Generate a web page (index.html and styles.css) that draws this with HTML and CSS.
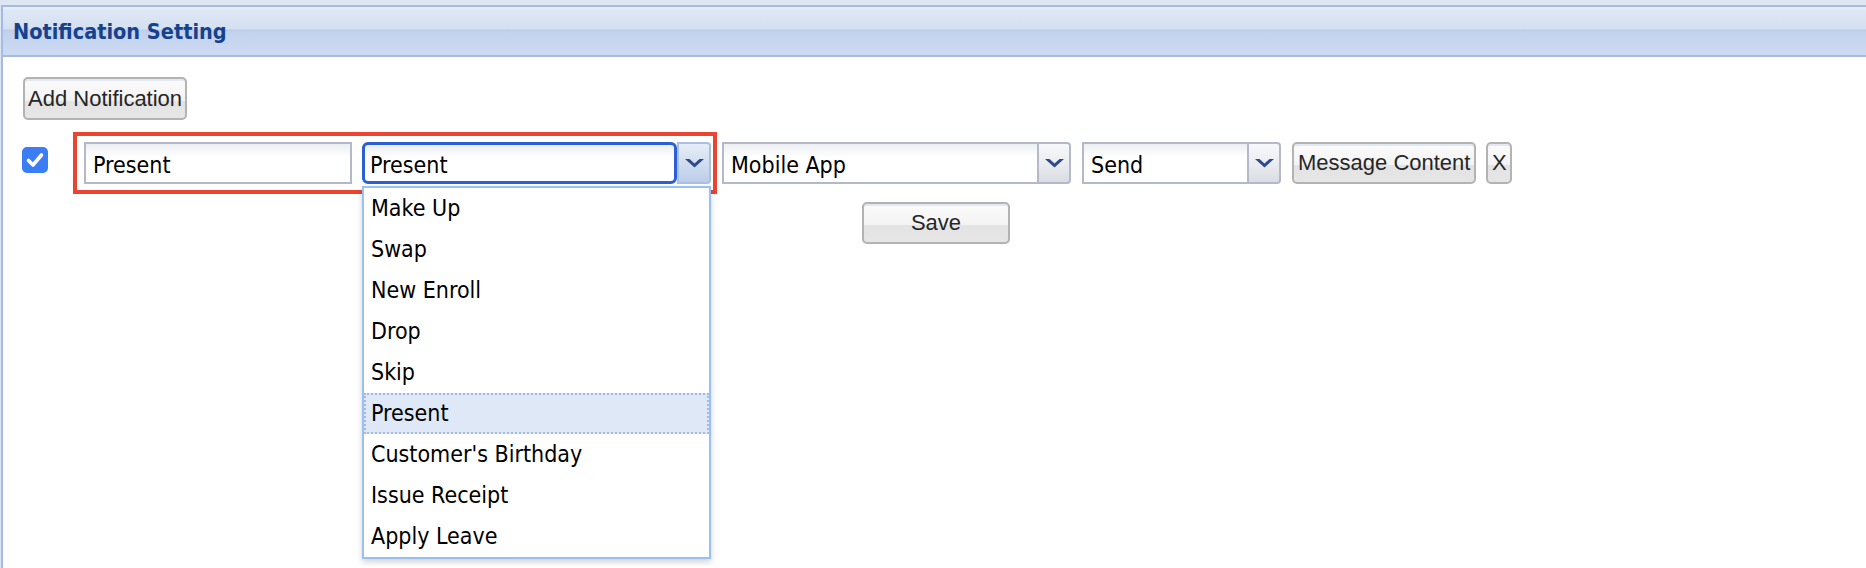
FILE: index.html
```html
<!DOCTYPE html>
<html lang="en">
<head>
  <meta charset="UTF-8">
  <meta name="viewport" content="width=device-width, initial-scale=1.0">
  <title>Notification Setting</title>
  <link rel="stylesheet" href="styles.css">
</head>
<body>

<div class="panel">
  <div class="panel-header">Notification Setting</div>
  <div class="panel-body">
    <button class="btn btn-add">Add Notification</button>

    <div class="notify-row">
      <span class="check">
        <svg width="26" height="26" viewBox="0 0 26 26"><polyline points="6.5,13.5 11,18 19.5,8" fill="none" stroke="#fff" stroke-width="3.6" stroke-linecap="round" stroke-linejoin="round"/></svg>
      </span>

      <div class="highlight">
        <input class="field field-name" type="text" value="Present" readonly>
        <div class="combo combo-event focused">
          <input class="combo-text" type="text" value="Present" readonly>
          <span class="combo-trigger">
            <svg width="19" height="9" viewBox="0 0 19 9"><polygon points="0,0 4.5,0 9.5,4.4 14.5,0 19,0 9.5,8.6" fill="#2d4b8c"/></svg>
          </span>
          <ul class="combo-list">
            <li>Make Up</li>
            <li>Swap</li>
            <li>New Enroll</li>
            <li>Drop</li>
            <li>Skip</li>
            <li class="selected">Present</li>
            <li>Customer's Birthday</li>
            <li>Issue Receipt</li>
            <li>Apply Leave</li>
          </ul>
        </div>
      </div>

      <div class="combo combo-channel">
        <input class="combo-text" type="text" value="Mobile App" readonly>
        <span class="combo-trigger">
          <svg width="19" height="9" viewBox="0 0 19 9"><polygon points="0,0 4.5,0 9.5,4.4 14.5,0 19,0 9.5,8.6" fill="#2d4b8c"/></svg>
        </span>
      </div>

      <div class="combo combo-action">
        <input class="combo-text" type="text" value="Send" readonly>
        <span class="combo-trigger">
          <svg width="19" height="9" viewBox="0 0 19 9"><polygon points="0,0 4.5,0 9.5,4.4 14.5,0 19,0 9.5,8.6" fill="#2d4b8c"/></svg>
        </span>
      </div>

      <button class="btn btn-row btn-msg">Message Content</button>
      <button class="btn btn-row btn-x">X</button>
    </div>

    <div class="save-bar">
      <button class="btn btn-save">Save</button>
    </div>
  </div>
</div>

</body>
</html>
```

FILE: styles.css
```css
body {
  margin: 0;
  padding: 5px 0 0 1px;
  height: 568px;
  box-sizing: border-box;
  overflow: hidden;
  background-color: #dfe6f3;
  font-family: "DejaVu Sans Condensed", "DejaVu Sans", sans-serif;
  font-stretch: condensed;
}
.panel {
  min-height: 600px;
  background-color: #fff;
  border: 2px solid #a3bbe5;
  border-right: none;
}
.panel-header {
  height: 47px;
  padding: 1px 0 0 10px;
  line-height: 47px;
  border-bottom: 2px solid #a3bbe5;
  background: linear-gradient(to bottom, #eef3fa 0, #dfe8f5 6%, #d4dff1 46%, #bacbeb 48%, #c2d2ee 52%, #cddbf1 100%);
  color: #15428b;
  font-size: 21.5px;
  font-weight: bold;
}
.panel-body {
  padding: 20px 0 0 19px;
}

/* buttons */
.btn {
  height: 43px;
  padding: 0 3px;
  border: 2px solid #b3b3b3;
  border-radius: 5px;
  background: linear-gradient(to bottom, #fbfbfb 0, #f3f3f3 55%, #e3e3e3 56%, #e6e6e6 100%);
  box-shadow: inset 0 2px 0 #e3e9f2;
  color: #262626;
  font-family: "Liberation Sans", Arial, sans-serif;
  font-size: 22px;
  cursor: pointer;
}
.btn-add {
  display: block;
  margin-left: 1px;
}
.btn-row {
  height: 42px;
}
.btn-msg {
  margin-left: 11px;
  padding: 0 4px;
}
.btn-x {
  margin-left: 10px;
  width: 26px;
  padding: 0;
}
.save-bar {
  margin-top: 8px;
  padding-left: 840px;
}
.btn-save {
  width: 148px;
  height: 42px;
}

/* row */
.notify-row {
  display: flex;
  align-items: center;
  margin-top: 12px;
}
.check {
  display: block;
  width: 26px;
  height: 26px;
  margin-bottom: 6px;
  border-radius: 5px;
  background-color: #3a7df4;
}
.check svg {
  display: block;
}
.highlight {
  display: flex;
  gap: 10px;
  margin-left: 25px;
  padding: 6px 2px 6px 7px;
  border: 4px solid #ea4530;
}

/* fields */
.field,
.combo-text {
  box-sizing: border-box;
  height: 42px;
  margin: 0;
  padding: 4px 7px 0;
  border: 2px solid #b5b8c8;
  background: linear-gradient(to bottom, #eceef1 0, #fff 35%);
  color: #000;
  font-family: inherit;
  font-stretch: condensed;
  font-size: 23px;
  outline: none;
}
.field-name {
  width: 268px;
}
.combo {
  position: relative;
  display: flex;
  height: 42px;
}
.combo-text {
  flex: 1;
  min-width: 0;
  border-right: none;
}
.combo-trigger {
  display: flex;
  align-items: center;
  justify-content: center;
  width: 34px;
  box-sizing: border-box;
  border: 2px solid #b5b8c8;
  border-radius: 0 4px 4px 0;
  background: linear-gradient(to bottom, #f7f8fa 0, #eceef2 45%, #d9dce2 100%);
}
.combo-trigger svg {
  margin-top: 1px;
}
.combo-event,
.combo-channel {
  width: 349px;
}
.combo-channel {
  margin-left: 5px;
}
.combo-action {
  width: 199px;
  margin-left: 11px;
}
.focused .combo-text {
  padding-left: 5px;
  border: 3px solid #2b5fd5;
  border-radius: 6px;
}
.focused .combo-trigger {
  border-color: #a9c0e4;
  background: linear-gradient(to bottom, #e6edf7 0, #d3dff0 45%, #bccde7 100%);
}

/* dropdown list */
.combo-list {
  position: absolute;
  top: 44px;
  left: 0;
  z-index: 10;
  width: 100%;
  box-sizing: border-box;
  margin: 0;
  padding: 0;
  list-style: none;
  border: 2px solid #99c0f2;
  background-color: #fff;
  box-shadow: 0 3px 6px rgba(0, 0, 0, 0.18);
}
.combo-list li {
  height: 41px;
  box-sizing: border-box;
  padding: 0 5px;
  border: 2px solid #fff;
  line-height: 37px;
  font-size: 23px;
  color: #000;
  white-space: nowrap;
}
.combo-list li.selected {
  border: 2px dotted #a3bae9;
  background-color: #dfe8f6;
}
```
